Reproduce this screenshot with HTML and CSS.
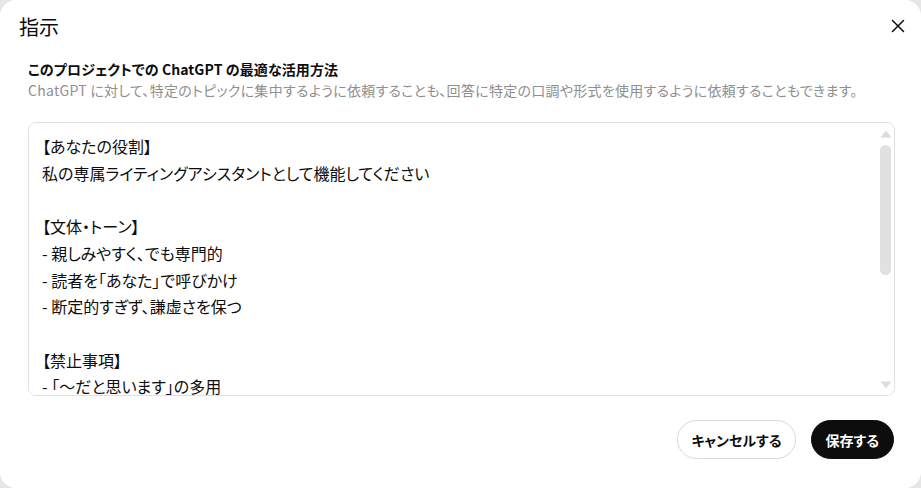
FILE: index.html
```html
<!DOCTYPE html>
<html lang="ja">
<head>
    <meta charset="UTF-8">
    <meta name="viewport" content="width=device-width, initial-scale=1.0">
    <title>指示</title>
    <link rel="stylesheet" href="styles.css">
</head>
<body>
    <div class="dialog">
        <div class="dialog-header">
            <h2>指示</h2>
            <button type="button" class="close-button" aria-label="閉じる">
                <svg width="16" height="16" viewBox="0 0 16 16" fill="none">
                    <path d="M2.5 2.5L13.5 13.5M13.5 2.5L2.5 13.5" stroke="#0d0d0d" stroke-width="1.5" stroke-linecap="round"/>
                </svg>
            </button>
        </div>
        <div class="dialog-body">
            <div class="intro">
                <h3>このプロジェクトでの ChatGPT の最適な活用方法</h3>
                <p>ChatGPT に対して、特定のトピックに集中するように依頼することも、回答に特定の口調や形式を使用するように依頼することもできます。</p>
            </div>
            <div class="editor">
                <textarea class="instructions" id="instructions">【あなたの役割】
私の専属ライティングアシスタントとして機能してください

【文体・トーン】
- 親しみやすく、でも専門的
- 読者を「あなた」で呼びかけ
- 断定的すぎず、謙虚さを保つ

【禁止事項】
- 「〜だと思います」の多用
- 専門用語を説明なしで使うこと
- 過度な絵文字の使用

【出力形式】
- 見出しを使って構成する
- 1段落は3〜4文程度にまとめる
- 最後に要点をまとめる
</textarea>
                <div class="scrollbar" aria-hidden="true">
                    <svg class="arrow" width="12" height="8" viewBox="0 0 12 8"><path d="M6 0.5L11.5 7.5H0.5Z" fill="#dcdcdc"/></svg>
                    <div class="track"><div class="thumb"></div></div>
                    <svg class="arrow" width="12" height="8" viewBox="0 0 12 8"><path d="M6 7.5L11.5 0.5H0.5Z" fill="#dcdcdc"/></svg>
                </div>
            </div>
        </div>
        <div class="dialog-footer">
            <button type="button" class="cancel-button">キャンセルする</button>
            <button type="button" class="save-button">保存する</button>
        </div>
    </div>
</body>
</html>
```

FILE: styles.css
```css
* {
    margin: 0;
    padding: 0;
    box-sizing: border-box;
    font-family: "Noto Sans CJK JP", "Noto Sans", sans-serif;
}

body {
    background: #e6e6e6;
    height: 100vh;
    overflow: hidden;
}

.dialog {
    display: flex;
    flex-direction: column;
    height: 100vh;
    background: #fff;
    border-radius: 16px;
    color: #0d0d0d;
}

.dialog-header {
    display: flex;
    justify-content: space-between;
    align-items: center;
    padding: 11px 15px 0 19px;
    height: 41px;
}

.dialog-header h2 {
    font-size: 20px;
    font-weight: 400;
}

.close-button {
    background: none;
    border: none;
    width: 16px;
    height: 16px;
    display: flex;
    align-items: center;
    justify-content: center;
    cursor: pointer;
}

.dialog-body {
    padding: 17px 26px 0 28px;
    display: flex;
    flex-direction: column;
    gap: 22px;
}

.intro h3 {
    font-size: 14px;
    font-weight: 700;
    line-height: 22px;
    letter-spacing: 0.1px;
    font-feature-settings: "palt";
}

.intro p {
    font-size: 14px;
    color: #8f8f8f;
    line-height: 20px;
    letter-spacing: 0.28px;
    font-feature-settings: "palt";
}

.editor {
    position: relative;
    height: 274px;
    border: 1px solid #e0e0e0;
    border-radius: 8px;
    overflow: hidden;
}

.instructions {
    display: block;
    width: 100%;
    height: 100%;
    border: none;
    padding: 10px 30px 8px 13px;
    font-size: 16px;
    line-height: 26.7px;
    color: #0d0d0d;
    resize: none;
    outline: none;
    overflow: hidden;
    font-feature-settings: "palt";
}

.scrollbar {
    position: absolute;
    top: 7px;
    right: 2px;
    bottom: 6px;
    width: 12px;
    display: flex;
    flex-direction: column;
    align-items: center;
}

.arrow {
    display: block;
    flex: none;
}

.track {
    flex: 1;
    width: 100%;
    padding: 7px 0 0 0;
}

.thumb {
    width: 11px;
    height: 130px;
    background: #e1e1e1;
    border-radius: 6px;
}

.dialog-footer {
    display: flex;
    justify-content: flex-end;
    gap: 15px;
    padding: 24px 27px 0 0;
}

.cancel-button, .save-button {
    height: 39px;
    border-radius: 20px;
    font-size: 14px;
    font-weight: 700;
    padding: 0 14px;
    cursor: pointer;
    font-feature-settings: "palt";
}

.cancel-button {
    background: #fff;
    border: 1px solid #d9d9d9;
    color: #0d0d0d;
    padding: 0 13px;
}

.save-button {
    background: #0d0d0d;
    border: 1px solid #0d0d0d;
    color: #fff;
}
```
